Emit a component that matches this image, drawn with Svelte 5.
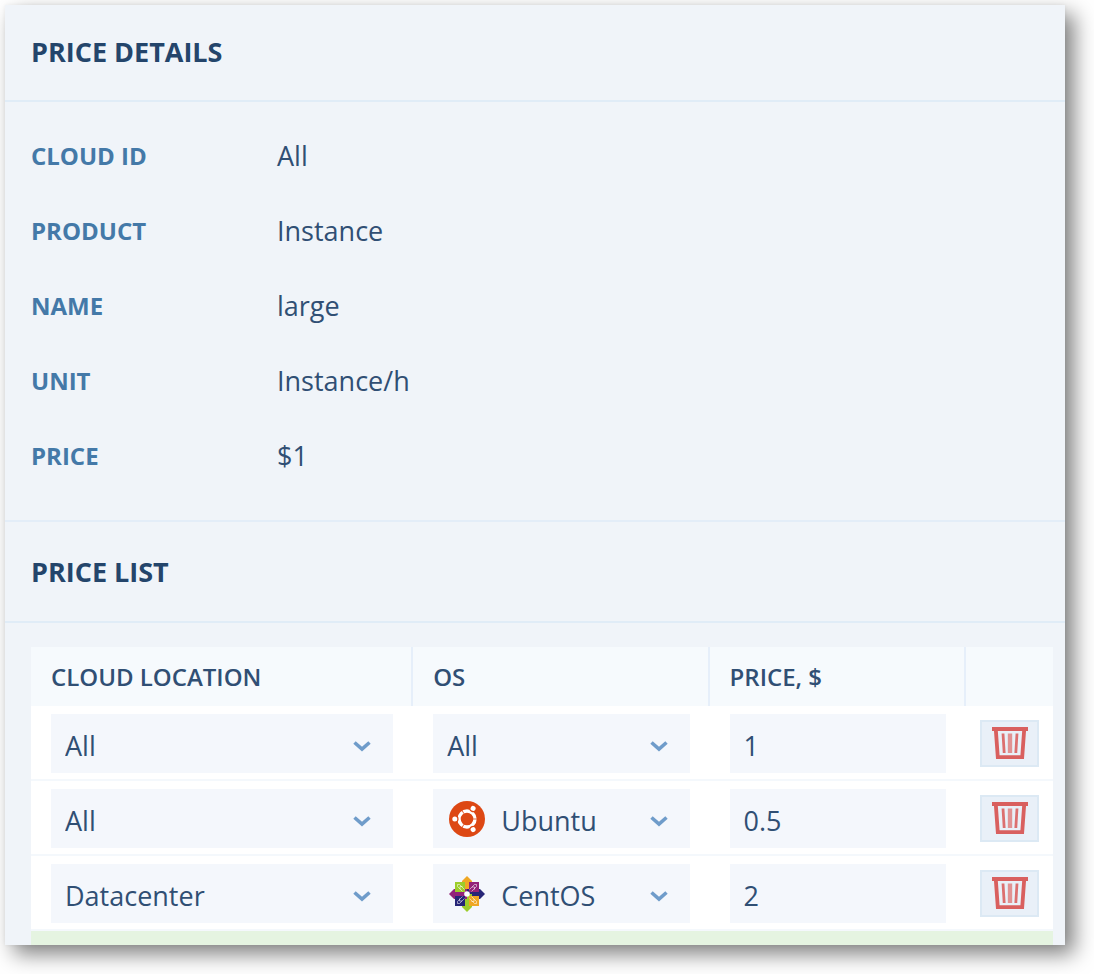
<script>
  const details = [
    { label: 'Cloud ID', value: 'All' },
    { label: 'Product', value: 'Instance' },
    { label: 'Name', value: 'large' },
    { label: 'Unit', value: 'Instance/h' },
    { label: 'Price', value: '$1' }
  ];
  const locations = ['All', 'Datacenter'];
  const systems = ['All', 'Ubuntu', 'CentOS'];

  let rows = $state([
    { id: 1, location: 'All', os: 'All', price: '1' },
    { id: 2, location: 'All', os: 'Ubuntu', price: '0.5' },
    { id: 3, location: 'Datacenter', os: 'CentOS', price: '2' }
  ]);

  function remove(id) {
    rows = rows.filter((row) => row.id !== id);
  }
</script>

{#snippet chevron()}
  <svg class="chevron" viewBox="0 0 18 12" aria-hidden="true">
    <path d="M1.5 2.5L9 9L16.5 2.5" fill="none" stroke="#6f9cca" stroke-width="3.6" />
  </svg>
{/snippet}

{#snippet ubuntu()}
  <svg class="logo" viewBox="0 0 36 36" aria-hidden="true">
    <circle cx="18" cy="18" r="18" fill="#dd4814" />
    <circle cx="18" cy="18" r="8" fill="none" stroke="#fff" stroke-width="3.4" />
    {#each [0, 120, 240] as angle}
      <g transform="rotate({angle} 18 18)">
        <circle cx="6.2" cy="18" r="3.4" fill="#dd4814" />
        <circle cx="5.8" cy="18" r="2.5" fill="#fff" />
        <path d="M24 18H28.5" stroke="#dd4814" stroke-width="0.8" />
      </g>
    {/each}
  </svg>
{/snippet}

{#snippet centos()}
  <svg class="logo" viewBox="0 0 36 36" aria-hidden="true">
    <path d="M18 0L23 5V18H13V5Z" fill="#efa724" />
    <path d="M36 18L31 23H18V13H31Z" fill="#262577" />
    <path d="M18 36L13 31V18H23V31Z" fill="#9ccd2a" />
    <path d="M0 18L5 13H18V23H5Z" fill="#932279" />
    <path d="M6 6H16V16H6Z" fill="#9ccd2a" />
    <path d="M20 6H30V16H20Z" fill="#932279" />
    <path d="M20 20H30V30H20Z" fill="#efa724" />
    <path d="M6 20H16V30H6Z" fill="#262577" />
    {#each [0, 90, 180, 270] as angle}
      <g transform="rotate({angle} 18 18)" fill="none" stroke="#fff" stroke-width="1" opacity=".55">
        <path d="M8.5 10.5L13.5 15.5M10.5 8.5L15.5 13.5M8.5 10.5V8.5H10.5M11 10.5V13M11 10.5H13.5" />
      </g>
    {/each}
    <circle cx="18" cy="18" r="2.8" fill="#fff" />
  </svg>
{/snippet}

<main class="panel">
  <section>
    <h2>Price details</h2>
    <dl>
      {#each details as item}
        <div class="detail">
          <dt>{item.label}</dt>
          <dd>{item.value}</dd>
        </div>
      {/each}
    </dl>
  </section>

  <section class="list">
    <h2>Price list</h2>
    <div class="body">
      <table>
        <thead>
          <tr>
            <th class="c-location" scope="col">Cloud location</th>
            <th class="c-os" scope="col">OS</th>
            <th scope="col">Price, $</th>
            <td></td>
          </tr>
        </thead>
        <tbody>
          {#each rows as row (row.id)}
            <tr>
              <td>
                <div class="field">
                  <select aria-label="Cloud location" bind:value={row.location}>
                    {#each locations as name}<option>{name}</option>{/each}
                  </select>
                  {@render chevron()}
                </div>
              </td>
              <td>
                <div class="field">
                  <select class:with-logo={row.os !== 'All'} aria-label="OS" bind:value={row.os}>
                    {#each systems as name}<option>{name}</option>{/each}
                  </select>
                  {#if row.os === 'Ubuntu'}{@render ubuntu()}{/if}
                  {#if row.os === 'CentOS'}{@render centos()}{/if}
                  {@render chevron()}
                </div>
              </td>
              <td>
                <div class="field">
                  <input type="text" inputmode="decimal" aria-label="Price, $" bind:value={row.price} />
                </div>
              </td>
              <td class="action">
                <button type="button" aria-label="Delete" onclick={() => remove(row.id)}>
                  <svg viewBox="0 0 36 32" aria-hidden="true">
                    <path d="M0 0H36V4H0Z" fill="#d9605f" />
                    <path d="M3.8 2.5L5.8 30.2H30.2L32.2 2.5" fill="none" stroke="#d9605f" stroke-width="3.8" />
                    <path d="M11 6.5L12.2 26M25 6.5L23.8 26" stroke="#dc6f6f" stroke-width="2.8" />
                    <path d="M18 6.5V26" stroke="#e19293" stroke-width="4.4" />
                  </svg>
                </button>
              </td>
            </tr>
          {/each}
        </tbody>
      </table>
      <div class="add"></div>
    </div>
  </section>
</main>

<style>
  :global(body) {
    background: #fff;
  }

  .panel {
    margin: 5px 29px 29px 5px;
    background: #f0f4f9;
    box-shadow: 9px 9px 20px rgba(0, 0, 0, 0.5), 0 0 4px rgba(0, 0, 0, 0.05);
    color: #304f74;
    font-family: "Open Sans", "Noto Sans", sans-serif;
    font-size: 27px;
  }

  h2 {
    margin: 0;
    padding: 0 26px 2px;
    border-bottom: 2px solid #e0ecf7;
    color: #24456b;
    font-size: 27px;
    font-weight: 700;
    line-height: 93px;
    text-transform: uppercase;
  }

  dl {
    margin: 0;
    padding: 16px 26px 27px;
  }

  .detail {
    display: grid;
    grid-template-columns: 246px 1fr;
    align-items: center;
    height: 75px;
  }

  dt {
    color: #4479a8;
    font-size: 24px;
    font-weight: 700;
    text-transform: uppercase;
  }

  dd {
    margin: 0;
  }

  .list {
    border-top: 2px solid #e3edf8;
  }

  .list h2 {
    padding-bottom: 0;
    line-height: 99px;
  }

  .body {
    padding: 24px 12px 0 26px;
  }

  table {
    width: 100%;
    table-layout: fixed;
    border-collapse: separate;
    border-spacing: 0;
    background: #fff;
  }

  .c-location {
    width: 37.4%;
  }

  .c-os {
    width: 29%;
  }

  thead th,
  thead td {
    box-sizing: border-box;
    height: 59px;
    padding: 0 20px;
    background: #f6fafd;
    font-size: 24px;
    font-weight: 600;
    text-align: left;
    text-transform: uppercase;
  }

  thead td {
    width: 87px;
  }

  thead th {
    border-right: 2px solid #e6effa;
  }

  tbody td {
    box-sizing: border-box;
    height: 75px;
    padding: 8px 20px 6px;
    border-bottom: 2px solid #f4f8fc;
  }

  tbody td.action {
    padding: 8px 14px 6px;
  }

  .field {
    position: relative;
    height: 59px;
    background: #f4f7fc;
  }

  select,
  input {
    box-sizing: border-box;
    width: 100%;
    height: 100%;
    margin: 0;
    padding: 4px 14px 0;
    border: 0;
    border-radius: 0;
    appearance: none;
    background: transparent;
    color: inherit;
    font: inherit;
  }

  select.with-logo {
    padding-left: 68px;
  }

  .logo {
    position: absolute;
    top: 12px;
    left: 16px;
    width: 36px;
    height: 36px;
    pointer-events: none;
  }

  .chevron {
    position: absolute;
    top: 26px;
    right: 22px;
    width: 18px;
    height: 12px;
    pointer-events: none;
  }

  button {
    display: flex;
    box-sizing: border-box;
    align-items: center;
    justify-content: center;
    width: 100%;
    height: 47px;
    padding: 0 0 2px;
    border: 2px solid #dce9f4;
    background: #e9f0f8;
    cursor: pointer;
  }

  button svg {
    width: 36px;
    height: 32px;
  }

  .add {
    height: 14px;
    background: #e5f4e1;
  }
</style>
